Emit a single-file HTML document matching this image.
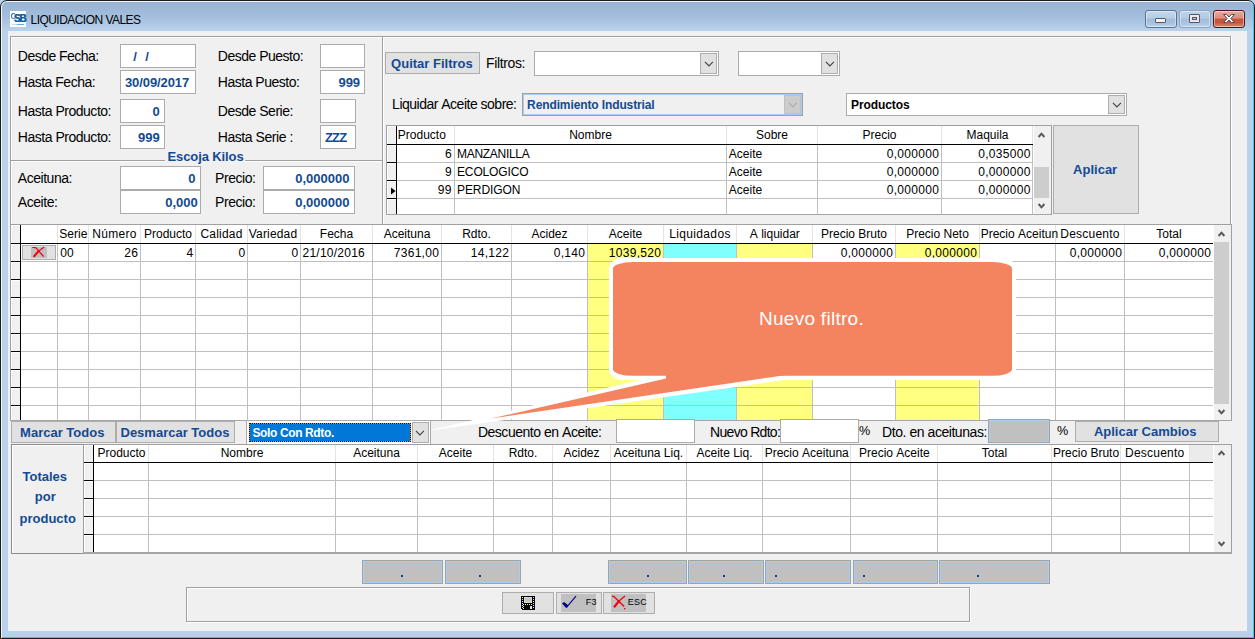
<!DOCTYPE html>
<html><head><meta charset="utf-8"><title>LIQUIDACION VALES</title><style>
html,body{margin:0;padding:0}
body{width:1255px;height:639px;overflow:hidden;position:relative;background:#b9d1ea;font-family:"Liberation Sans",sans-serif}
body>div,body>span,body>svg{position:absolute;display:block}
span{white-space:nowrap}
#win{left:0;top:0;width:1255px;height:639px;box-sizing:border-box;border:1px solid #1c1c1c;border-radius:7px 7px 0 0;background:#b9d1ea;box-shadow:inset 1px 1px 0 #f4f8fc, inset -1px -1px 0 #36c9f5}
#title{left:2px;top:2px;width:1251px;height:30px;background:linear-gradient(#98b4d4 0%,#a4bedc 50%,#bcd3ec 100%);border-radius:5px 5px 0 0}
#client{left:8px;top:31px;width:1239px;height:600px;background:#f0f0f0}
</style></head><body>
<div id="win"></div>
<div id="title"></div>
<div id="client"></div>
<div style="left:10px;top:11px;width:16px;height:16px;background:#fff"></div>
<span style="left:13.7px;top:13.4px;font-size:10px;line-height:11px;font-weight:bold;color:#0f62a3;letter-spacing:-1px;text-shadow:.5px 0 #0f62a3">SB</span>
<div style="left:12px;top:24px;width:12px;height:1px;background:linear-gradient(90deg,#c4dff0 0,#c4dff0 45%,#6aa8d6 45%,#6aa8d6 100%)"></div>
<div style="left:11px;top:13px;width:5px;height:6px;border:1.3px solid #1f78c0;border-radius:50%;box-sizing:border-box;border-right-color:transparent"></div>
<span style="left:30.50px;top:12.34px;font-size:12px;line-height:16px;color:#000;letter-spacing:-0.538px;">LIQUIDACION&nbsp;VALES</span>
<div style="left:1145px;top:10px;width:32px;height:18px;box-sizing:border-box;border:1px solid #5b7190;border-radius:3px;background:linear-gradient(#c3d6ec 0%,#b7cde7 45%,#a1bbd9 50%,#a6c0dd 75%,#bcd2ea 100%);box-shadow:inset 0 0 0 1px rgba(255,255,255,.45)"></div>
<div style="left:1179px;top:10px;width:32px;height:18px;box-sizing:border-box;border:1px solid #8ba4c0;border-radius:3px;background:linear-gradient(#bed3ea 0%,#b3cae5 45%,#a3bddb 50%,#a9c3df 75%,#bad0e9 100%);box-shadow:inset 0 0 0 1px rgba(255,255,255,.45)"></div>
<div style="left:1213px;top:10px;width:32px;height:18px;box-sizing:border-box;border:1px solid #4d1420;border-radius:3px;background:linear-gradient(#e8a99a 0%,#dd8c7b 45%,#c9543a 50%,#c9543a 72%,#d98a72 100%);box-shadow:inset 0 0 0 1px rgba(255,255,255,.45)"></div>
<div style="left:1155px;top:18px;width:11px;height:5px;box-sizing:border-box;border:1px solid #535a6c;border-radius:1px;background:#f4f0f2"></div>
<div style="left:1189px;top:14px;width:11px;height:9px;box-sizing:border-box;border:1px solid #535a6c;border-radius:1px;background:#ebe4ea"></div>
<div style="left:1192px;top:17px;width:5px;height:3px;box-sizing:border-box;border:1px solid #535a6c;background:#a9c3df"></div>
<svg style="left:1222px;top:13px" width="14" height="11" viewBox="0 0 14 11"><path d="M1.5 1.5 L4.5 1.5 L7 4 L9.5 1.5 L12.5 1.5 L8.8 5.5 L12.5 9.5 L9.5 9.5 L7 7 L4.5 9.5 L1.5 9.5 L5.2 5.5 Z" fill="#fff" stroke="#4b4f63" stroke-width="1" stroke-linejoin="round"/></svg>
<div style="left:10px;top:36px;width:1221px;height:189px;box-sizing:border-box;border:1px solid #a0a0a0;border-bottom:none;box-shadow:inset 1px 1px 0 #fff"></div>
<div style="left:1231px;top:37px;width:1px;height:187px;background:#fff"></div>
<div style="left:382px;top:37px;width:1px;height:188px;background:#a0a0a0"></div>
<div style="left:383px;top:37px;width:1px;height:188px;background:#fff"></div>
<div style="left:11px;top:160px;width:371px;height:1px;background:#a0a0a0"></div>
<div style="left:11px;top:161px;width:371px;height:1px;background:#fff"></div>
<div style="left:165px;top:153px;width:80px;height:10px;background:#f0f0f0"></div>
<span style="left:167.50px;top:147.70px;font-size:13px;line-height:17px;font-weight:bold;color:#124a94;letter-spacing:-0.109px;">Escoja&nbsp;Kilos</span>
<div style="left:120px;top:44px;width:76px;height:24px;box-sizing:border-box;border:1px solid #ababab;background:#fff"></div>
<div style="left:120px;top:70px;width:76px;height:24px;box-sizing:border-box;border:1px solid #ababab;background:#fff"></div>
<div style="left:120px;top:99px;width:45px;height:24px;box-sizing:border-box;border:1px solid #ababab;background:#fff"></div>
<div style="left:120px;top:125px;width:45px;height:24px;box-sizing:border-box;border:1px solid #ababab;background:#fff"></div>
<div style="left:320px;top:44px;width:45px;height:24px;box-sizing:border-box;border:1px solid #ababab;background:#fff"></div>
<div style="left:320px;top:70px;width:45px;height:24px;box-sizing:border-box;border:1px solid #ababab;background:#fff"></div>
<div style="left:320px;top:99px;width:36px;height:24px;box-sizing:border-box;border:1px solid #ababab;background:#fff"></div>
<div style="left:320px;top:125px;width:36px;height:24px;box-sizing:border-box;border:1px solid #ababab;background:#fff"></div>
<div style="left:120px;top:166px;width:81px;height:24px;box-sizing:border-box;border:1px solid #ababab;background:#fff"></div>
<div style="left:120px;top:190px;width:81px;height:24px;box-sizing:border-box;border:1px solid #ababab;background:#fff"></div>
<div style="left:263px;top:166px;width:92px;height:24px;box-sizing:border-box;border:1px solid #ababab;background:#fff"></div>
<div style="left:263px;top:190px;width:92px;height:24px;box-sizing:border-box;border:1px solid #ababab;background:#fff"></div>
<span style="left:17.80px;top:47.05px;font-size:14px;line-height:18px;color:#000;letter-spacing:-0.519px;">Desde&nbsp;Fecha:</span>
<span style="left:17.80px;top:73.05px;font-size:14px;line-height:18px;color:#000;letter-spacing:-0.496px;">Hasta&nbsp;Fecha:</span>
<span style="left:17.80px;top:102.05px;font-size:14px;line-height:18px;color:#000;letter-spacing:-0.478px;">Hasta&nbsp;Producto:</span>
<span style="left:17.80px;top:128.05px;font-size:14px;line-height:18px;color:#000;letter-spacing:-0.478px;">Hasta&nbsp;Producto:</span>
<span style="left:217.80px;top:47.05px;font-size:14px;line-height:18px;color:#000;letter-spacing:-0.505px;">Desde&nbsp;Puesto:</span>
<span style="left:217.80px;top:73.05px;font-size:14px;line-height:18px;color:#000;letter-spacing:-0.483px;">Hasta&nbsp;Puesto:</span>
<span style="left:217.80px;top:102.05px;font-size:14px;line-height:18px;color:#000;letter-spacing:-0.482px;">Desde&nbsp;Serie:</span>
<span style="left:217.80px;top:128.05px;font-size:14px;line-height:18px;color:#000;letter-spacing:-0.445px;">Hasta&nbsp;Serie&nbsp;:</span>
<span style="left:17.80px;top:169.05px;font-size:14px;line-height:18px;color:#000;letter-spacing:-0.463px;">Aceituna:</span>
<span style="left:17.80px;top:193.05px;font-size:14px;line-height:18px;color:#000;letter-spacing:-0.437px;">Aceite:</span>
<span style="left:215.10px;top:169.05px;font-size:14px;line-height:18px;color:#000;letter-spacing:-0.445px;">Precio:</span>
<span style="left:215.10px;top:193.05px;font-size:14px;line-height:18px;color:#000;letter-spacing:-0.445px;">Precio:</span>
<span style="left:133.20px;top:47.50px;font-size:13px;line-height:17px;font-weight:bold;color:#124a94;">/</span>
<span style="left:145.20px;top:47.50px;font-size:13px;line-height:17px;font-weight:bold;color:#124a94;">/</span>
<span style="left:125.00px;top:74.00px;font-size:13px;line-height:17px;font-weight:bold;color:#124a94;letter-spacing:-0.106px;">30/09/2017</span>
<span style="left:152.57px;top:102.50px;font-size:13px;line-height:17px;font-weight:bold;color:#124a94;">0</span>
<span style="left:138.11px;top:128.50px;font-size:13px;line-height:17px;font-weight:bold;color:#124a94;">999</span>
<span style="left:338.41px;top:74.00px;font-size:13px;line-height:17px;font-weight:bold;color:#124a94;">999</span>
<span style="left:324.90px;top:128.50px;font-size:13px;line-height:17px;font-weight:bold;color:#124a94;letter-spacing:-0.741px;">ZZZ</span>
<span style="left:188.27px;top:169.50px;font-size:13px;line-height:17px;font-weight:bold;color:#124a94;">0</span>
<span style="left:165.17px;top:193.50px;font-size:13px;line-height:17px;font-weight:bold;color:#124a94;">0,000</span>
<span style="left:295.28px;top:169.50px;font-size:13px;line-height:17px;font-weight:bold;color:#124a94;">0,000000</span>
<span style="left:295.28px;top:193.50px;font-size:13px;line-height:17px;font-weight:bold;color:#124a94;">0,000000</span>
<div style="left:385px;top:52px;width:95px;height:22px;box-sizing:border-box;border:1px solid #adadad;background:#e1e1e1"></div>
<span style="left:391.10px;top:55.00px;font-size:13px;line-height:17px;font-weight:bold;color:#124a94;">Quitar&nbsp;Filtros</span>
<span style="left:486.10px;top:54.05px;font-size:14px;line-height:18px;color:#000;letter-spacing:-0.375px;">Filtros:</span>
<div style="left:534px;top:51px;width:185px;height:25px;box-sizing:border-box;border:1px solid #ababab;background:#fff"></div>
<div style="left:700px;top:53px;width:17px;height:21px;box-sizing:border-box;border:1px solid #adadad;background:#e1e1e1"></div>
<svg style="left:703.5px;top:61.0px" width="10" height="6" viewBox="0 0 10 6"><path d="M0.9 0.9 L4.9 4.9 L8.9 0.9" fill="none" stroke="#404040" stroke-width="1.1"/></svg>
<div style="left:738px;top:51px;width:102px;height:25px;box-sizing:border-box;border:1px solid #ababab;background:#fff"></div>
<div style="left:821px;top:53px;width:17px;height:21px;box-sizing:border-box;border:1px solid #adadad;background:#e1e1e1"></div>
<svg style="left:824.5px;top:61.0px" width="10" height="6" viewBox="0 0 10 6"><path d="M0.9 0.9 L4.9 4.9 L8.9 0.9" fill="none" stroke="#404040" stroke-width="1.1"/></svg>
<span style="left:392.10px;top:95.05px;font-size:14px;line-height:18px;color:#000;letter-spacing:-0.502px;">Liquidar&nbsp;Aceite&nbsp;sobre:</span>
<div style="left:522px;top:93px;width:281px;height:23px;box-sizing:border-box;border:1px solid #a0a0a0;background:#f0f0f0;box-shadow:inset 0 0 0 1px #a9cdf2"></div>
<div style="left:784px;top:95px;width:17px;height:19px;box-sizing:border-box;border:1px solid #bfbfbf;background:#cccccc"></div>
<svg style="left:787.5px;top:102.0px" width="10" height="6" viewBox="0 0 10 6"><path d="M0.9 0.9 L4.9 4.9 L8.9 0.9" fill="none" stroke="#b5a9a9" stroke-width="1.1"/></svg>
<span style="left:527.10px;top:96.94px;font-size:12px;line-height:16px;font-weight:bold;color:#124a94;letter-spacing:-0.114px;">Rendimiento&nbsp;Industrial</span>
<div style="left:846px;top:93px;width:281px;height:23px;box-sizing:border-box;border:1px solid #ababab;background:#fff"></div>
<div style="left:1108px;top:95px;width:17px;height:19px;box-sizing:border-box;border:1px solid #adadad;background:#e1e1e1"></div>
<svg style="left:1111.5px;top:102.0px" width="10" height="6" viewBox="0 0 10 6"><path d="M0.9 0.9 L4.9 4.9 L8.9 0.9" fill="none" stroke="#404040" stroke-width="1.1"/></svg>
<span style="left:851.10px;top:96.94px;font-size:12px;line-height:16px;font-weight:bold;color:#000;letter-spacing:-0.093px;">Productos</span>
<div style="left:1053px;top:125px;width:86px;height:89px;box-sizing:border-box;border:1px solid #adadad;background:#e1e1e1"></div>
<span style="left:1073.10px;top:161.30px;font-size:13px;line-height:17px;font-weight:bold;color:#124a94;">Aplicar</span>
<div style="left:387px;top:126px;width:664px;height:88px;background:#fff"></div>
<div style="left:386px;top:125px;width:666px;height:1px;background:#a0a0a0"></div>
<div style="left:386px;top:125px;width:1px;height:90px;background:#a0a0a0"></div>
<div style="left:386px;top:214px;width:666px;height:1px;background:#a6a6a6"></div>
<div style="left:1051px;top:125px;width:1px;height:90px;background:#a0a0a0"></div>
<div style="left:454px;top:126px;width:1px;height:18px;background:#e3e3e3"></div>
<div style="left:454px;top:145px;width:1px;height:69px;background:#bfbfbf"></div>
<div style="left:726px;top:126px;width:1px;height:18px;background:#e3e3e3"></div>
<div style="left:726px;top:145px;width:1px;height:69px;background:#bfbfbf"></div>
<div style="left:817px;top:126px;width:1px;height:18px;background:#e3e3e3"></div>
<div style="left:817px;top:145px;width:1px;height:69px;background:#bfbfbf"></div>
<div style="left:941px;top:126px;width:1px;height:18px;background:#e3e3e3"></div>
<div style="left:941px;top:145px;width:1px;height:69px;background:#bfbfbf"></div>
<div style="left:1032px;top:126px;width:1px;height:18px;background:#e3e3e3"></div>
<div style="left:1032px;top:145px;width:1px;height:69px;background:#bfbfbf"></div>
<div style="left:397px;top:162px;width:636px;height:1px;background:#bfbfbf"></div>
<div style="left:397px;top:180px;width:636px;height:1px;background:#bfbfbf"></div>
<div style="left:397px;top:198px;width:636px;height:1px;background:#bfbfbf"></div>
<div style="left:387px;top:126px;width:9px;height:88px;background:#f0f0f0"></div>
<div style="left:387px;top:144px;width:9px;height:1px;background:#000"></div>
<div style="left:387px;top:162px;width:9px;height:1px;background:#000"></div>
<div style="left:387px;top:180px;width:9px;height:1px;background:#000"></div>
<div style="left:387px;top:198px;width:9px;height:1px;background:#000"></div>
<div style="left:387px;top:126px;width:9px;height:1px;background:#fff"></div>
<div style="left:387px;top:126px;width:1px;height:18px;background:#fff"></div>
<div style="left:387px;top:145px;width:9px;height:1px;background:#fff"></div>
<div style="left:387px;top:145px;width:1px;height:17px;background:#fff"></div>
<div style="left:387px;top:163px;width:9px;height:1px;background:#fff"></div>
<div style="left:387px;top:163px;width:1px;height:17px;background:#fff"></div>
<div style="left:387px;top:181px;width:9px;height:1px;background:#fff"></div>
<div style="left:387px;top:181px;width:1px;height:17px;background:#fff"></div>
<div style="left:387px;top:199px;width:9px;height:1px;background:#fff"></div>
<div style="left:387px;top:199px;width:1px;height:15px;background:#fff"></div>
<div style="left:396px;top:126px;width:1px;height:88px;background:#000"></div>
<div style="left:396px;top:144px;width:637px;height:1px;background:#000"></div>
<div style="left:1033px;top:126px;width:1px;height:88px;background:#fff"></div>
<div style="left:1034px;top:126px;width:17px;height:88px;background:#f0f0f0"></div>
<span style="left:397.80px;top:127.34px;font-size:12px;line-height:16px;color:#000;">Producto</span>
<span style="left:569.16px;top:127.34px;font-size:12px;line-height:16px;color:#000;">Nombre</span>
<span style="left:755.99px;top:127.34px;font-size:12px;line-height:16px;color:#000;">Sobre</span>
<span style="left:862.49px;top:127.34px;font-size:12px;line-height:16px;color:#000;">Precio</span>
<span style="left:966.49px;top:127.34px;font-size:12px;line-height:16px;color:#000;">Maquila</span>
<span style="left:445.03px;top:145.84px;font-size:12px;line-height:16px;color:#000;">6</span>
<span style="left:457.00px;top:145.84px;font-size:12px;line-height:16px;color:#000;letter-spacing:-0.295px;">MANZANILLA</span>
<span style="left:728.80px;top:145.84px;font-size:12px;line-height:16px;color:#000;">Aceite</span>
<span style="left:886.75px;top:145.84px;font-size:12px;line-height:16px;color:#000;letter-spacing:0.300px;">0,000000</span>
<span style="left:978.25px;top:145.84px;font-size:12px;line-height:16px;color:#000;letter-spacing:0.300px;">0,035000</span>
<span style="left:445.03px;top:163.84px;font-size:12px;line-height:16px;color:#000;">9</span>
<span style="left:457.00px;top:163.84px;font-size:12px;line-height:16px;color:#000;letter-spacing:-0.142px;">ECOLOGICO</span>
<span style="left:728.80px;top:163.84px;font-size:12px;line-height:16px;color:#000;">Aceite</span>
<span style="left:886.75px;top:163.84px;font-size:12px;line-height:16px;color:#000;letter-spacing:0.300px;">0,000000</span>
<span style="left:978.25px;top:163.84px;font-size:12px;line-height:16px;color:#000;letter-spacing:0.300px;">0,000000</span>
<span style="left:437.75px;top:181.84px;font-size:12px;line-height:16px;color:#000;letter-spacing:0.300px;">99</span>
<span style="left:457.00px;top:181.84px;font-size:12px;line-height:16px;color:#000;letter-spacing:-0.076px;">PERDIGON</span>
<span style="left:728.80px;top:181.84px;font-size:12px;line-height:16px;color:#000;">Aceite</span>
<span style="left:886.75px;top:181.84px;font-size:12px;line-height:16px;color:#000;letter-spacing:0.300px;">0,000000</span>
<span style="left:978.25px;top:181.84px;font-size:12px;line-height:16px;color:#000;letter-spacing:0.300px;">0,000000</span>
<svg style="left:391px;top:187px" width="5" height="8" viewBox="0 0 5 8"><path d="M0 0.5 L4.6 4 L0 7.5 Z" fill="#000"/></svg>
<svg style="left:1037px;top:131px" width="9" height="8" viewBox="0 0 9 8"><path d="M1.6 6 L4.5 2.7 L7.4 6" fill="none" stroke="#585858" stroke-width="2"/></svg>
<svg style="left:1037px;top:201.6px" width="9" height="8" viewBox="0 0 9 8"><path d="M1.6 2 L4.5 5.3 L7.4 2" fill="none" stroke="#585858" stroke-width="2"/></svg>
<div style="left:1034px;top:167px;width:15px;height:31px;background:#cdcdcd"></div>
<div style="left:11px;top:225px;width:1220px;height:195px;background:#fff"></div>
<div style="left:588px;top:244px;width:75px;height:176px;background:#ffff80"></div>
<div style="left:664px;top:244px;width:72px;height:176px;background:#80ffff"></div>
<div style="left:737px;top:244px;width:75px;height:176px;background:#ffff80"></div>
<div style="left:896px;top:244px;width:83px;height:176px;background:#ffff80"></div>
<div style="left:10px;top:224px;width:1222px;height:1px;background:#a0a0a0"></div>
<div style="left:10px;top:224px;width:1px;height:197px;background:#a0a0a0"></div>
<div style="left:10px;top:420px;width:1222px;height:1px;background:#a6a6a6"></div>
<div style="left:1231px;top:224px;width:1px;height:197px;background:#a0a0a0"></div>
<div style="left:57px;top:225px;width:1px;height:18px;background:#e3e3e3"></div>
<div style="left:57px;top:244px;width:1px;height:176px;background:#bfbfbf"></div>
<div style="left:88px;top:225px;width:1px;height:18px;background:#e3e3e3"></div>
<div style="left:88px;top:244px;width:1px;height:176px;background:#bfbfbf"></div>
<div style="left:140px;top:225px;width:1px;height:18px;background:#e3e3e3"></div>
<div style="left:140px;top:244px;width:1px;height:176px;background:#bfbfbf"></div>
<div style="left:195px;top:225px;width:1px;height:18px;background:#e3e3e3"></div>
<div style="left:195px;top:244px;width:1px;height:176px;background:#bfbfbf"></div>
<div style="left:247px;top:225px;width:1px;height:18px;background:#e3e3e3"></div>
<div style="left:247px;top:244px;width:1px;height:176px;background:#bfbfbf"></div>
<div style="left:300px;top:225px;width:1px;height:18px;background:#e3e3e3"></div>
<div style="left:300px;top:244px;width:1px;height:176px;background:#bfbfbf"></div>
<div style="left:372px;top:225px;width:1px;height:18px;background:#e3e3e3"></div>
<div style="left:372px;top:244px;width:1px;height:176px;background:#bfbfbf"></div>
<div style="left:441px;top:225px;width:1px;height:18px;background:#e3e3e3"></div>
<div style="left:441px;top:244px;width:1px;height:176px;background:#bfbfbf"></div>
<div style="left:511px;top:225px;width:1px;height:18px;background:#e3e3e3"></div>
<div style="left:511px;top:244px;width:1px;height:176px;background:#bfbfbf"></div>
<div style="left:587px;top:225px;width:1px;height:18px;background:#e3e3e3"></div>
<div style="left:587px;top:244px;width:1px;height:176px;background:#bfbfbf"></div>
<div style="left:663px;top:225px;width:1px;height:18px;background:#e3e3e3"></div>
<div style="left:663px;top:244px;width:1px;height:176px;background:#bfbfbf"></div>
<div style="left:736px;top:225px;width:1px;height:18px;background:#e3e3e3"></div>
<div style="left:736px;top:244px;width:1px;height:176px;background:#bfbfbf"></div>
<div style="left:812px;top:225px;width:1px;height:18px;background:#e3e3e3"></div>
<div style="left:812px;top:244px;width:1px;height:176px;background:#bfbfbf"></div>
<div style="left:895px;top:225px;width:1px;height:18px;background:#e3e3e3"></div>
<div style="left:895px;top:244px;width:1px;height:176px;background:#bfbfbf"></div>
<div style="left:979px;top:225px;width:1px;height:18px;background:#e3e3e3"></div>
<div style="left:979px;top:244px;width:1px;height:176px;background:#bfbfbf"></div>
<div style="left:1055px;top:225px;width:1px;height:18px;background:#e3e3e3"></div>
<div style="left:1055px;top:244px;width:1px;height:176px;background:#bfbfbf"></div>
<div style="left:1124px;top:225px;width:1px;height:18px;background:#e3e3e3"></div>
<div style="left:1124px;top:244px;width:1px;height:176px;background:#bfbfbf"></div>
<div style="left:21px;top:261px;width:1192px;height:1px;background:#bfbfbf"></div>
<div style="left:21px;top:279px;width:1192px;height:1px;background:#bfbfbf"></div>
<div style="left:21px;top:297px;width:1192px;height:1px;background:#bfbfbf"></div>
<div style="left:21px;top:315px;width:1192px;height:1px;background:#bfbfbf"></div>
<div style="left:21px;top:333px;width:1192px;height:1px;background:#bfbfbf"></div>
<div style="left:21px;top:351px;width:1192px;height:1px;background:#bfbfbf"></div>
<div style="left:21px;top:369px;width:1192px;height:1px;background:#bfbfbf"></div>
<div style="left:21px;top:387px;width:1192px;height:1px;background:#bfbfbf"></div>
<div style="left:21px;top:405px;width:1192px;height:1px;background:#bfbfbf"></div>
<div style="left:11px;top:225px;width:9px;height:195px;background:#f0f0f0"></div>
<div style="left:11px;top:243px;width:9px;height:1px;background:#000"></div>
<div style="left:11px;top:261px;width:9px;height:1px;background:#000"></div>
<div style="left:11px;top:279px;width:9px;height:1px;background:#000"></div>
<div style="left:11px;top:297px;width:9px;height:1px;background:#000"></div>
<div style="left:11px;top:315px;width:9px;height:1px;background:#000"></div>
<div style="left:11px;top:333px;width:9px;height:1px;background:#000"></div>
<div style="left:11px;top:351px;width:9px;height:1px;background:#000"></div>
<div style="left:11px;top:369px;width:9px;height:1px;background:#000"></div>
<div style="left:11px;top:387px;width:9px;height:1px;background:#000"></div>
<div style="left:11px;top:405px;width:9px;height:1px;background:#000"></div>
<div style="left:11px;top:225px;width:9px;height:1px;background:#fff"></div>
<div style="left:11px;top:225px;width:1px;height:18px;background:#fff"></div>
<div style="left:11px;top:244px;width:9px;height:1px;background:#fff"></div>
<div style="left:11px;top:244px;width:1px;height:17px;background:#fff"></div>
<div style="left:11px;top:262px;width:9px;height:1px;background:#fff"></div>
<div style="left:11px;top:262px;width:1px;height:17px;background:#fff"></div>
<div style="left:11px;top:280px;width:9px;height:1px;background:#fff"></div>
<div style="left:11px;top:280px;width:1px;height:17px;background:#fff"></div>
<div style="left:11px;top:298px;width:9px;height:1px;background:#fff"></div>
<div style="left:11px;top:298px;width:1px;height:17px;background:#fff"></div>
<div style="left:11px;top:316px;width:9px;height:1px;background:#fff"></div>
<div style="left:11px;top:316px;width:1px;height:17px;background:#fff"></div>
<div style="left:11px;top:334px;width:9px;height:1px;background:#fff"></div>
<div style="left:11px;top:334px;width:1px;height:17px;background:#fff"></div>
<div style="left:11px;top:352px;width:9px;height:1px;background:#fff"></div>
<div style="left:11px;top:352px;width:1px;height:17px;background:#fff"></div>
<div style="left:11px;top:370px;width:9px;height:1px;background:#fff"></div>
<div style="left:11px;top:370px;width:1px;height:17px;background:#fff"></div>
<div style="left:11px;top:388px;width:9px;height:1px;background:#fff"></div>
<div style="left:11px;top:388px;width:1px;height:17px;background:#fff"></div>
<div style="left:11px;top:406px;width:9px;height:1px;background:#fff"></div>
<div style="left:11px;top:406px;width:1px;height:14px;background:#fff"></div>
<div style="left:20px;top:225px;width:1px;height:195px;background:#000"></div>
<div style="left:20px;top:243px;width:1193px;height:1px;background:#000"></div>
<div style="left:1213px;top:225px;width:1px;height:195px;background:#fff"></div>
<div style="left:1214px;top:225px;width:17px;height:195px;background:#f0f0f0"></div>
<span style="left:59.30px;top:226.34px;font-size:12px;line-height:16px;color:#000;">Serie</span>
<span style="left:92.35px;top:226.34px;font-size:12px;line-height:16px;color:#000;letter-spacing:0.270px;">Número</span>
<span style="left:143.98px;top:226.34px;font-size:12px;line-height:16px;color:#000;">Producto</span>
<span style="left:200.50px;top:226.34px;font-size:12px;line-height:16px;color:#000;letter-spacing:0.186px;">Calidad</span>
<span style="left:248.75px;top:226.34px;font-size:12px;line-height:16px;color:#000;letter-spacing:0.169px;">Variedad</span>
<span style="left:319.82px;top:226.34px;font-size:12px;line-height:16px;color:#000;">Fecha</span>
<span style="left:383.65px;top:226.34px;font-size:12px;line-height:16px;color:#000;">Aceituna</span>
<span style="left:462.16px;top:226.34px;font-size:12px;line-height:16px;color:#000;">Rdto.</span>
<span style="left:531.49px;top:226.34px;font-size:12px;line-height:16px;color:#000;">Acidez</span>
<span style="left:608.82px;top:226.34px;font-size:12px;line-height:16px;color:#000;">Aceite</span>
<span style="left:669.25px;top:226.34px;font-size:12px;line-height:16px;color:#000;letter-spacing:0.345px;">Liquidados</span>
<span style="left:749.82px;top:226.34px;font-size:12px;line-height:16px;color:#000;">A&nbsp;liquidar</span>
<span style="left:820.98px;top:226.34px;font-size:12px;line-height:16px;color:#000;">Precio&nbsp;Bruto</span>
<span style="left:906.15px;top:226.34px;font-size:12px;line-height:16px;color:#000;">Precio&nbsp;Neto</span>
<span style="left:980.70px;top:226.34px;font-size:12px;line-height:16px;color:#000;">Precio&nbsp;Aceitun</span>
<span style="left:1060.25px;top:226.34px;font-size:12px;line-height:16px;color:#000;letter-spacing:0.237px;">Descuento</span>
<span style="left:1156.33px;top:226.34px;font-size:12px;line-height:16px;color:#000;">Total</span>
<span style="left:60.30px;top:245.34px;font-size:12px;line-height:16px;color:#000;">00</span>
<span style="left:124.25px;top:245.34px;font-size:12px;line-height:16px;color:#000;letter-spacing:0.300px;">26</span>
<span style="left:186.53px;top:245.34px;font-size:12px;line-height:16px;color:#000;">4</span>
<span style="left:238.53px;top:245.34px;font-size:12px;line-height:16px;color:#000;">0</span>
<span style="left:291.53px;top:245.34px;font-size:12px;line-height:16px;color:#000;">0</span>
<span style="left:393.72px;top:245.34px;font-size:12px;line-height:16px;color:#000;letter-spacing:0.300px;">7361,00</span>
<span style="left:470.70px;top:245.34px;font-size:12px;line-height:16px;color:#000;letter-spacing:0.300px;">14,122</span>
<span style="left:553.67px;top:245.34px;font-size:12px;line-height:16px;color:#000;letter-spacing:0.300px;">0,140</span>
<span style="left:608.75px;top:245.34px;font-size:12px;line-height:16px;color:#000;letter-spacing:0.300px;">1039,520</span>
<span style="left:840.75px;top:245.34px;font-size:12px;line-height:16px;color:#000;letter-spacing:0.300px;">0,000000</span>
<span style="left:924.75px;top:245.34px;font-size:12px;line-height:16px;color:#000;letter-spacing:0.300px;">0,000000</span>
<span style="left:1069.75px;top:245.34px;font-size:12px;line-height:16px;color:#000;letter-spacing:0.300px;">0,000000</span>
<span style="left:1158.75px;top:245.34px;font-size:12px;line-height:16px;color:#000;letter-spacing:0.300px;">0,000000</span>
<span style="left:302.50px;top:245.34px;font-size:12px;line-height:16px;color:#000;letter-spacing:0.244px;">21/10/2016</span>
<div style="left:22px;top:245px;width:34px;height:15px;box-sizing:border-box;border:1px solid #adadad;background:#e1e1e1"></div>
<div style="left:31px;top:247px;width:16px;height:11px;background:#c0c0c0"></div>
<svg style="left:31px;top:246px" width="16" height="13" viewBox="0 0 16 13"><path d="M1.2 1.5 L4.8 1.7 L12.7 10.6" stroke="#f0000c" stroke-width="1.25" fill="none" stroke-linejoin="round"/><path d="M13.2 1 L7 5.6" stroke="#e0000c" stroke-width="1.15" fill="none"/><path d="M8 4.6 L2.6 10.9" stroke="#f4000c" stroke-width="2.1" fill="none"/></svg>
<svg style="left:1217px;top:229.5px" width="9" height="8" viewBox="0 0 9 8"><path d="M1.6 6 L4.5 2.7 L7.4 6" fill="none" stroke="#585858" stroke-width="2"/></svg>
<svg style="left:1217px;top:408px" width="9" height="8" viewBox="0 0 9 8"><path d="M1.6 2 L4.5 5.3 L7.4 2" fill="none" stroke="#585858" stroke-width="2"/></svg>
<div style="left:1214px;top:242px;width:15px;height:162px;background:#cdcdcd"></div>
<div style="left:11px;top:421px;width:105px;height:22px;box-sizing:border-box;border:1px solid #adadad;background:#e1e1e1"></div>
<span style="left:20.10px;top:423.50px;font-size:13px;line-height:17px;font-weight:bold;color:#124a94;">Marcar&nbsp;Todos</span>
<div style="left:116px;top:421px;width:119px;height:22px;box-sizing:border-box;border:1px solid #adadad;background:#e1e1e1"></div>
<span style="left:120.50px;top:423.50px;font-size:13px;line-height:17px;font-weight:bold;color:#124a94;">Desmarcar&nbsp;Todos</span>
<div style="left:246px;top:420px;width:185px;height:25px;box-sizing:border-box;border:1px solid #ababab;background:#fff"></div>
<div style="left:249px;top:423px;width:162px;height:19px;background:#e58a2c"></div>
<div style="left:249px;top:423px;width:162px;height:19px;box-sizing:border-box;border:1px dotted #111;background:#0078d7;background-clip:padding-box"></div>
<span style="left:252.40px;top:424.94px;font-size:12px;line-height:16px;font-weight:bold;color:#fff;letter-spacing:-0.368px;">Solo&nbsp;Con&nbsp;Rdto.</span>
<div style="left:412px;top:422px;width:17px;height:21px;box-sizing:border-box;border:1px solid #adadad;background:#e1e1e1"></div>
<svg style="left:415px;top:429.8px" width="10" height="6" viewBox="0 0 10 6"><path d="M0.9 0.9 L4.9 4.9 L8.9 0.9" fill="none" stroke="#404040" stroke-width="1.1"/></svg>
<span style="left:477.90px;top:423.05px;font-size:14px;line-height:18px;color:#000;letter-spacing:-0.473px;">Descuento&nbsp;en&nbsp;Aceite:</span>
<div style="left:616px;top:419px;width:79px;height:24px;box-sizing:border-box;border:1px solid #ababab;background:#fff"></div>
<span style="left:710.10px;top:423.05px;font-size:14px;line-height:18px;color:#000;letter-spacing:-0.711px;">Nuevo&nbsp;Rdto:</span>
<div style="left:780px;top:419px;width:79px;height:24px;box-sizing:border-box;border:1px solid #ababab;background:#fff"></div>
<span style="left:859.10px;top:423.23px;font-size:12.6px;line-height:17px;color:#000;">%</span>
<span style="left:882.10px;top:423.05px;font-size:14px;line-height:18px;color:#000;letter-spacing:-0.448px;">Dto.&nbsp;en&nbsp;aceitunas:</span>
<div style="left:988px;top:419px;width:62px;height:24px;box-sizing:border-box;border:1px solid #a3a3a3;background:#c0c0c0;box-shadow:inset 0 0 0 1px #a9cdf2"></div>
<span style="left:1057.10px;top:423.23px;font-size:12.6px;line-height:17px;color:#000;">%</span>
<div style="left:1075px;top:421px;width:144px;height:21px;box-sizing:border-box;border:1px solid #adadad;background:#e1e1e1"></div>
<span style="left:1093.90px;top:423.30px;font-size:13px;line-height:17px;font-weight:bold;color:#124a94;">Aplicar&nbsp;Cambios</span>
<div style="left:11px;top:444px;width:73px;height:110px;box-sizing:border-box;border:1px solid #8c8c8c;background:#f0f0f0;box-shadow:inset 1px 1px 0 #fff"></div>
<span style="left:22.53px;top:467.50px;font-size:13px;line-height:17px;font-weight:bold;color:#124a94;">Totales</span>
<span style="left:34.83px;top:487.50px;font-size:13px;line-height:17px;font-weight:bold;color:#124a94;">por</span>
<span style="left:19.54px;top:509.50px;font-size:13px;line-height:17px;font-weight:bold;color:#124a94;">producto</span>
<div style="left:84px;top:445px;width:1147px;height:107px;background:#fff"></div>
<div style="left:83px;top:444px;width:1149px;height:1px;background:#a0a0a0"></div>
<div style="left:83px;top:444px;width:1px;height:109px;background:#a0a0a0"></div>
<div style="left:83px;top:552px;width:1149px;height:2px;background:#a6a6a6"></div>
<div style="left:1231px;top:444px;width:1px;height:109px;background:#a0a0a0"></div>
<div style="left:148px;top:445px;width:1px;height:17px;background:#e3e3e3"></div>
<div style="left:148px;top:463px;width:1px;height:89px;background:#bfbfbf"></div>
<div style="left:335px;top:445px;width:1px;height:17px;background:#e3e3e3"></div>
<div style="left:335px;top:463px;width:1px;height:89px;background:#bfbfbf"></div>
<div style="left:417px;top:445px;width:1px;height:17px;background:#e3e3e3"></div>
<div style="left:417px;top:463px;width:1px;height:89px;background:#bfbfbf"></div>
<div style="left:493px;top:445px;width:1px;height:17px;background:#e3e3e3"></div>
<div style="left:493px;top:463px;width:1px;height:89px;background:#bfbfbf"></div>
<div style="left:552px;top:445px;width:1px;height:17px;background:#e3e3e3"></div>
<div style="left:552px;top:463px;width:1px;height:89px;background:#bfbfbf"></div>
<div style="left:610px;top:445px;width:1px;height:17px;background:#e3e3e3"></div>
<div style="left:610px;top:463px;width:1px;height:89px;background:#bfbfbf"></div>
<div style="left:686px;top:445px;width:1px;height:17px;background:#e3e3e3"></div>
<div style="left:686px;top:463px;width:1px;height:89px;background:#bfbfbf"></div>
<div style="left:762px;top:445px;width:1px;height:17px;background:#e3e3e3"></div>
<div style="left:762px;top:463px;width:1px;height:89px;background:#bfbfbf"></div>
<div style="left:850px;top:445px;width:1px;height:17px;background:#e3e3e3"></div>
<div style="left:850px;top:463px;width:1px;height:89px;background:#bfbfbf"></div>
<div style="left:937px;top:445px;width:1px;height:17px;background:#e3e3e3"></div>
<div style="left:937px;top:463px;width:1px;height:89px;background:#bfbfbf"></div>
<div style="left:1051px;top:445px;width:1px;height:17px;background:#e3e3e3"></div>
<div style="left:1051px;top:463px;width:1px;height:89px;background:#bfbfbf"></div>
<div style="left:1120px;top:445px;width:1px;height:17px;background:#e3e3e3"></div>
<div style="left:1120px;top:463px;width:1px;height:89px;background:#bfbfbf"></div>
<div style="left:1189px;top:445px;width:1px;height:17px;background:#e3e3e3"></div>
<div style="left:1189px;top:463px;width:1px;height:89px;background:#bfbfbf"></div>
<div style="left:94px;top:480px;width:1119px;height:1px;background:#bfbfbf"></div>
<div style="left:94px;top:498px;width:1119px;height:1px;background:#bfbfbf"></div>
<div style="left:94px;top:516px;width:1119px;height:1px;background:#bfbfbf"></div>
<div style="left:94px;top:534px;width:1119px;height:1px;background:#bfbfbf"></div>
<div style="left:84px;top:445px;width:9px;height:107px;background:#f0f0f0"></div>
<div style="left:84px;top:462px;width:9px;height:1px;background:#000"></div>
<div style="left:84px;top:480px;width:9px;height:1px;background:#000"></div>
<div style="left:84px;top:498px;width:9px;height:1px;background:#000"></div>
<div style="left:84px;top:516px;width:9px;height:1px;background:#000"></div>
<div style="left:84px;top:534px;width:9px;height:1px;background:#000"></div>
<div style="left:84px;top:445px;width:9px;height:1px;background:#fff"></div>
<div style="left:84px;top:445px;width:1px;height:17px;background:#fff"></div>
<div style="left:84px;top:463px;width:9px;height:1px;background:#fff"></div>
<div style="left:84px;top:463px;width:1px;height:17px;background:#fff"></div>
<div style="left:84px;top:481px;width:9px;height:1px;background:#fff"></div>
<div style="left:84px;top:481px;width:1px;height:17px;background:#fff"></div>
<div style="left:84px;top:499px;width:9px;height:1px;background:#fff"></div>
<div style="left:84px;top:499px;width:1px;height:17px;background:#fff"></div>
<div style="left:84px;top:517px;width:9px;height:1px;background:#fff"></div>
<div style="left:84px;top:517px;width:1px;height:17px;background:#fff"></div>
<div style="left:84px;top:535px;width:9px;height:1px;background:#fff"></div>
<div style="left:84px;top:535px;width:1px;height:17px;background:#fff"></div>
<div style="left:93px;top:445px;width:1px;height:107px;background:#000"></div>
<div style="left:93px;top:462px;width:1120px;height:1px;background:#000"></div>
<div style="left:1213px;top:445px;width:1px;height:107px;background:#fff"></div>
<div style="left:1214px;top:445px;width:17px;height:107px;background:#f0f0f0"></div>
<span style="left:97.50px;top:445.34px;font-size:12px;line-height:16px;color:#000;">Producto</span>
<span style="left:220.66px;top:445.34px;font-size:12px;line-height:16px;color:#000;">Nombre</span>
<span style="left:353.15px;top:445.34px;font-size:12px;line-height:16px;color:#000;">Aceituna</span>
<span style="left:438.82px;top:445.34px;font-size:12px;line-height:16px;color:#000;">Aceite</span>
<span style="left:508.66px;top:445.34px;font-size:12px;line-height:16px;color:#000;">Rdto.</span>
<span style="left:563.49px;top:445.34px;font-size:12px;line-height:16px;color:#000;">Acidez</span>
<span style="left:613.81px;top:445.34px;font-size:12px;line-height:16px;color:#000;">Aceituna&nbsp;Liq.</span>
<span style="left:696.48px;top:445.34px;font-size:12px;line-height:16px;color:#000;">Aceite&nbsp;Liq.</span>
<span style="left:764.70px;top:445.34px;font-size:12px;line-height:16px;color:#000;">Precio&nbsp;Aceituna</span>
<span style="left:858.98px;top:445.34px;font-size:12px;line-height:16px;color:#000;">Precio&nbsp;Aceite</span>
<span style="left:981.83px;top:445.34px;font-size:12px;line-height:16px;color:#000;">Total</span>
<span style="left:1053.10px;top:445.34px;font-size:12px;line-height:16px;color:#000;">Precio&nbsp;Bruto</span>
<span style="left:1125.00px;top:445.34px;font-size:12px;line-height:16px;color:#000;letter-spacing:0.237px;">Descuento</span>
<div style="left:1190px;top:445px;width:23px;height:17px;background:#ebebeb"></div>
<svg style="left:1217px;top:448.8px" width="9" height="8" viewBox="0 0 9 8"><path d="M1.6 6 L4.5 2.7 L7.4 6" fill="none" stroke="#585858" stroke-width="2"/></svg>
<svg style="left:1217px;top:540px" width="9" height="8" viewBox="0 0 9 8"><path d="M1.6 2 L4.5 5.3 L7.4 2" fill="none" stroke="#585858" stroke-width="2"/></svg>
<div style="left:362px;top:560px;width:81px;height:24px;box-sizing:border-box;border:1px solid #a3a3a3;background:#c0c0c0;box-shadow:inset 0 0 0 1px #a9cdf2"></div>
<div style="left:401px;top:575px;width:2px;height:2px;background:#0c3c92"></div>
<div style="left:445px;top:560px;width:76px;height:24px;box-sizing:border-box;border:1px solid #a3a3a3;background:#c0c0c0;box-shadow:inset 0 0 0 1px #a9cdf2"></div>
<div style="left:479px;top:575px;width:2px;height:2px;background:#0c3c92"></div>
<div style="left:608px;top:560px;width:79px;height:24px;box-sizing:border-box;border:1px solid #a3a3a3;background:#c0c0c0;box-shadow:inset 0 0 0 1px #a9cdf2"></div>
<div style="left:647px;top:575px;width:2px;height:2px;background:#0c3c92"></div>
<div style="left:688px;top:560px;width:76px;height:24px;box-sizing:border-box;border:1px solid #a3a3a3;background:#c0c0c0;box-shadow:inset 0 0 0 1px #a9cdf2"></div>
<div style="left:723px;top:575px;width:2px;height:2px;background:#0c3c92"></div>
<div style="left:765px;top:560px;width:86px;height:24px;box-sizing:border-box;border:1px solid #a3a3a3;background:#c0c0c0;box-shadow:inset 0 0 0 1px #a9cdf2"></div>
<div style="left:775px;top:575px;width:2px;height:2px;background:#0c3c92"></div>
<div style="left:853px;top:560px;width:85px;height:24px;box-sizing:border-box;border:1px solid #a3a3a3;background:#c0c0c0;box-shadow:inset 0 0 0 1px #a9cdf2"></div>
<div style="left:863px;top:575px;width:2px;height:2px;background:#0c3c92"></div>
<div style="left:939px;top:560px;width:111px;height:24px;box-sizing:border-box;border:1px solid #a3a3a3;background:#c0c0c0;box-shadow:inset 0 0 0 1px #a9cdf2"></div>
<div style="left:977px;top:575px;width:2px;height:2px;background:#0c3c92"></div>
<div style="left:186px;top:587px;width:784px;height:35px;box-sizing:border-box;border:1px solid #a0a0a0;box-shadow:inset 1px 1px 0 #fff,1px 1px 0 #fff"></div>
<div style="left:502px;top:592px;width:52px;height:22px;box-sizing:border-box;border:1px solid #adadad;background:#e1e1e1"></div>
<div style="left:556px;top:592px;width:46px;height:22px;box-sizing:border-box;border:1px solid #adadad;background:#e1e1e1"></div>
<div style="left:603px;top:592px;width:52px;height:22px;box-sizing:border-box;border:1px solid #adadad;background:#e1e1e1"></div>
<div style="left:561px;top:594px;width:35px;height:18px;background:#c0c0c0"></div>
<div style="left:611px;top:594px;width:35px;height:18px;background:#c0c0c0"></div>
<svg style="left:521px;top:596px" width="14" height="14" viewBox="0 0 14 14" shape-rendering="crispEdges"><rect x="0" y="0" width="14" height="14" fill="#000"/><rect x="3" y="1" width="8" height="6" fill="#c3c3c3"/><rect x="3.5" y="1.5" width="7" height="5" fill="none" stroke="#d9d9d9" stroke-width="1" shape-rendering="auto"/><path d="M1.5 1 V13" stroke="#ffff00" stroke-width="1" stroke-dasharray="1 1"/><path d="M2.5 7 V13" stroke="#ffff00" stroke-width="1" stroke-dasharray="1 1" stroke-dashoffset="1"/><path d="M12.5 3 V13" stroke="#ffff00" stroke-width="1" stroke-dasharray="1 1"/><path d="M2 8.5 H12" stroke="#ffff00" stroke-width="1" stroke-dasharray="1 1"/><rect x="9" y="10" width="2" height="3" fill="#e4e4e4"/><rect x="12" y="1" width="1" height="1" fill="#d0d0d0"/><rect x="0" y="13" width="1" height="1" fill="#f0f0f0"/></svg>
<svg style="left:561px;top:594px" width="18" height="17" viewBox="0 0 18 17"><path d="M5.3 13.6 L15 2.2" fill="none" stroke="#00008b" stroke-width="1.1"/><path d="M1 9.6 L5.3 14 L7.3 11.2 L3 8 Z" fill="#00008b"/></svg>
<span style="left:585.70px;top:596.28px;font-size:9px;line-height:13px;color:#000;letter-spacing:0.248px;">F3</span>
<svg style="left:611px;top:595px" width="16" height="15" viewBox="0 0 16 15"><path d="M1 1.2 L3 1.6 L13.2 11.4" stroke="#f0000c" stroke-width="1.4" fill="none"/><path d="M14 1 L8 6" stroke="#e8000c" stroke-width="1.2" fill="none"/><path d="M8.6 5.4 L3 12.3" stroke="#f4000c" stroke-width="2.2" fill="none"/><rect x="13" y="13" width="1.3" height="1.3" fill="#e0000c"/></svg>
<span style="left:627.80px;top:596.28px;font-size:9px;line-height:13px;color:#000;letter-spacing:0.165px;">ESC</span>
<svg style="left:431px;top:250px" width="599" height="190" viewBox="431 250 599 190">
<path d="M666 373.8 L427 431 L795 378.6 L795 370 L666 370 Z" fill="#fff"/>
<rect x="609" y="258" width="407" height="122" rx="13" ry="11" fill="#fff"/>
<rect x="613" y="262" width="399" height="113.8" rx="20" ry="6.5" fill="#f4845f"/>
<path d="M666 372 L666 378.6 L490.7 418.6 L785 375.2 L785 372 Z" fill="#f4845f"/>
</svg>
<span style="left:759.00px;top:306.92px;font-size:19px;line-height:23px;color:#fff;letter-spacing:0.279px;">Nuevo&nbsp;filtro.</span>
</body></html>
